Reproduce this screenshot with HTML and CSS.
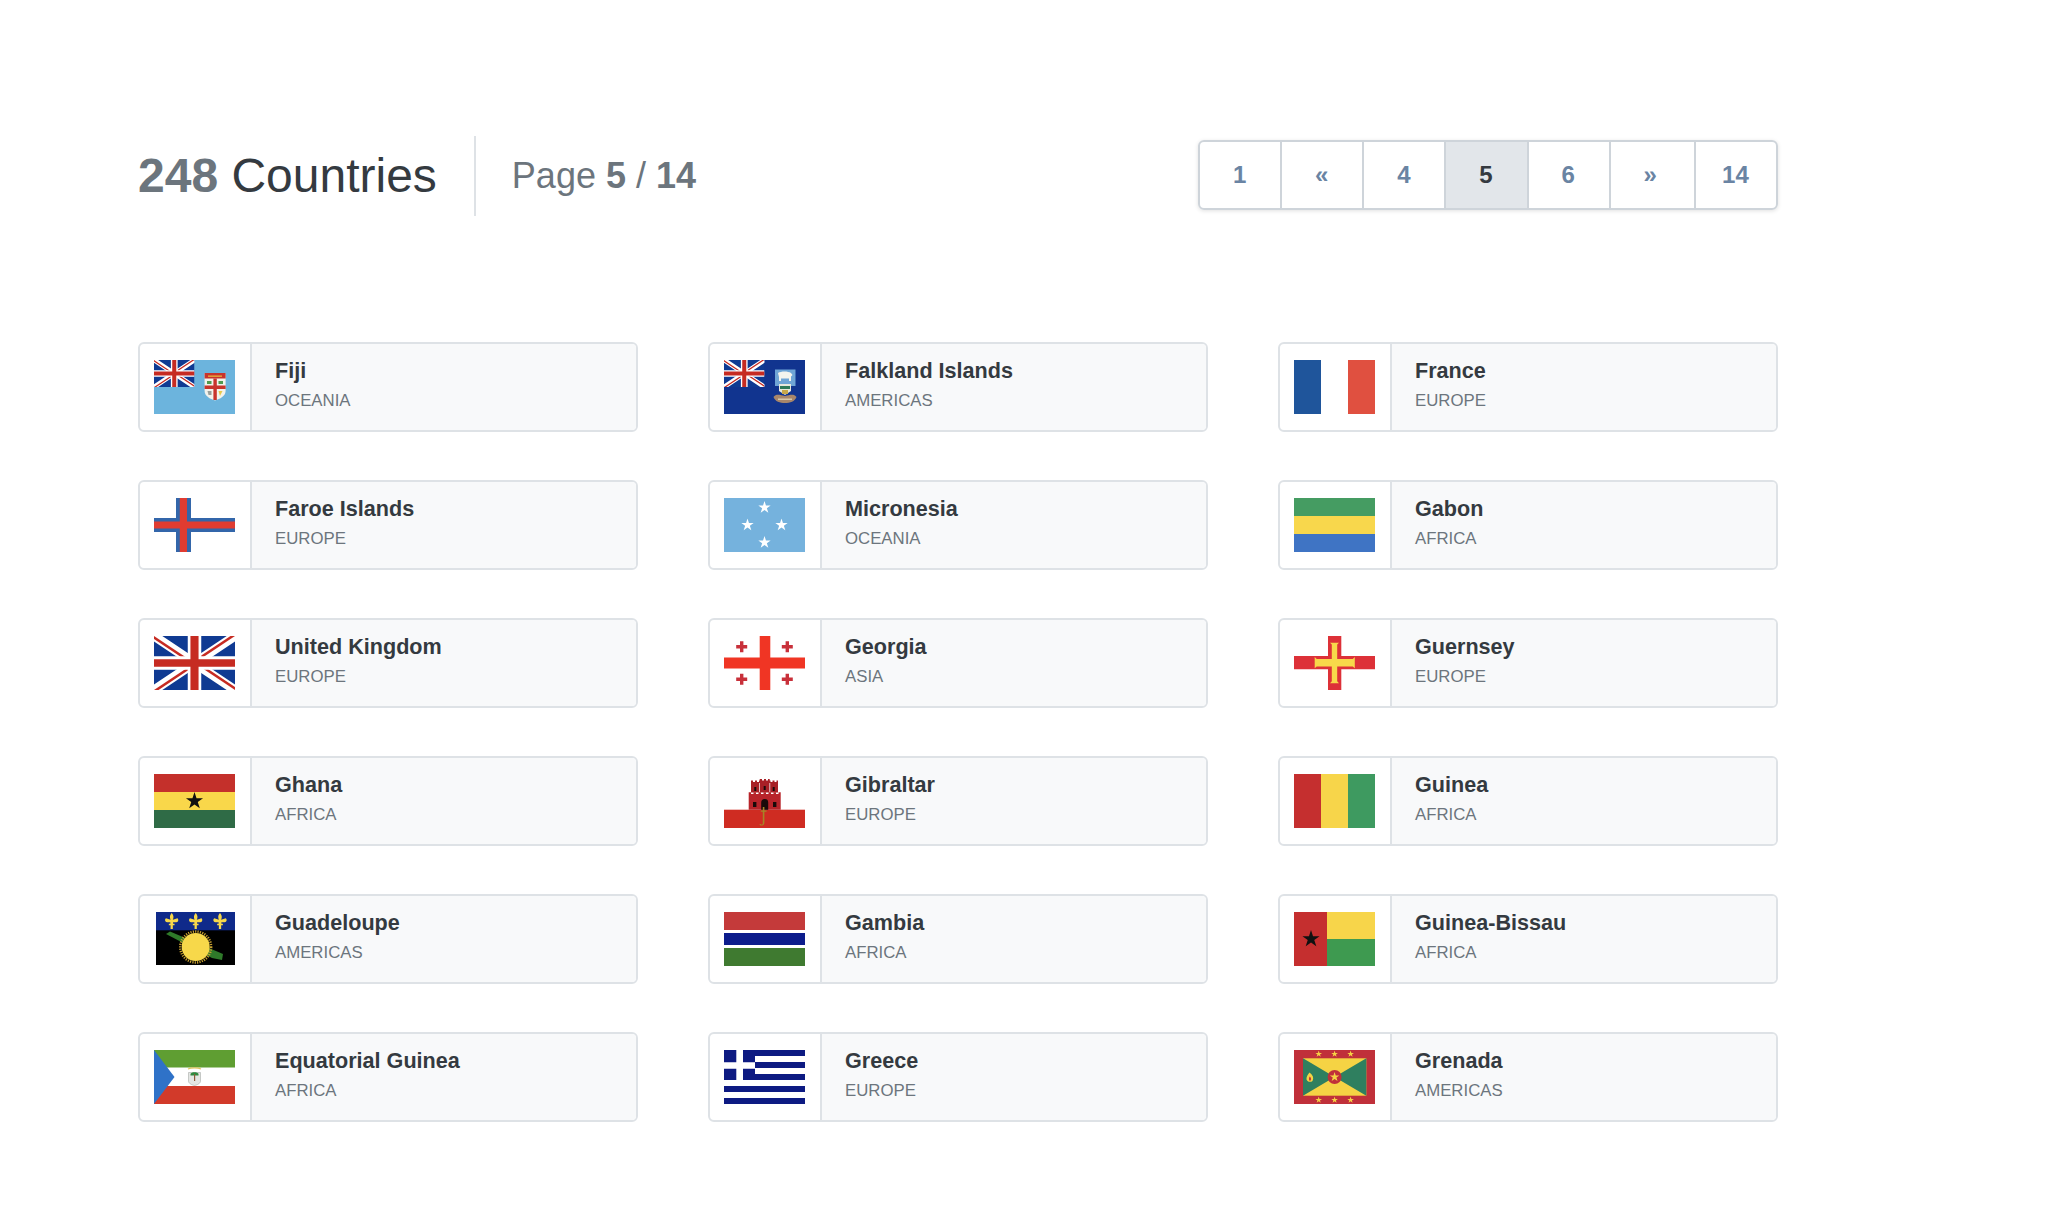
FILE: index.html
```html
<!DOCTYPE html>
<html lang="en">
<head>
    <meta charset="UTF-8">
    <title>Countries - Page 5</title>
    <link rel="stylesheet" href="styles.css">
</head>
<body>
    <!-- shared flag pieces -->
    <svg class="defs" width="0" height="0">
        <defs>
            <clipPath id="jack-clip"><path d="M30,15 h30 v15 z v15 h-30 z h-30 v-15 z v-15 h30 z"/></clipPath>
            <symbol id="jack" viewBox="0 0 60 30" preserveAspectRatio="none">
                <rect width="60" height="30" fill="#0f3a92"/>
                <path d="M0,0 L60,30 M60,0 L0,30" stroke="#fff" stroke-width="5.5"/>
                <path d="M0,0 L60,30 M60,0 L0,30" stroke="#c62b22" stroke-width="3" clip-path="url(#jack-clip)"/>
                <path d="M25,0 H35 V11.3 H60 V18.7 H35 V30 H25 V18.7 H0 V11.3 H25 Z" fill="#fff"/>
                <path d="M27,0 H33 V12.9 H60 V17.1 H33 V30 H27 V17.1 H0 V12.9 H27 Z" fill="#c62b22"/>
            </symbol>
            <symbol id="star" viewBox="-1 -1 2 2">
                <polygon points="0,-1 .225,-.309 .951,-.309 .363,.118 .588,.809 0,.382 -.588,.809 -.363,.118 -.951,-.309 -.225,-.309"/>
            </symbol>
            <symbol id="fleur" viewBox="0 0 12 14">
                <path d="M6,0 C7.6,2 8,3.5 7,6 L11,4.5 C12.4,5.5 12,8 10,8 L7.2,8 L7.2,9.5 L8.5,9.5 L8.5,10.8 L7,10.8 L7,14 L5,14 L5,10.8 L3.5,10.8 L3.5,9.5 L4.8,9.5 L4.8,8 L2,8 C0,8 -.4,5.5 1,4.5 L5,6 C4,3.5 4.4,2 6,0 Z" fill="#f7d84a"/>
            </symbol>
        </defs>
    </svg>

    <div class="page">
        <header class="page-header">
            <h1 class="total"><strong>248</strong> Countries</h1>
            <p class="page-count">Page <strong>5</strong> / <strong>14</strong></p>
            <nav class="pagination">
                <a href="#">1</a>
                <a href="#">«</a>
                <a href="#">4</a>
                <a href="#" class="active">5</a>
                <a href="#">6</a>
                <a href="#" class="next">»</a>
                <a href="#">14</a>
            </nav>
        </header>

        <div class="country-grid">
            <a href="#" class="country-card">
                <span class="flag-cell">
                    <svg class="flag" viewBox="0 0 81 54">
                        <rect width="81" height="54" fill="#6cb4dd"/>
                        <use href="#jack" width="40.5" height="27"/>
                        <path d="M50.6,13 H71.6 V31 C71.6,36 66,39 61,40.5 C56,39 50.6,36 50.6,31 Z" fill="#f2f2ec"/>
                        <path d="M50.6,13 H71.6 V18.5 H50.6 Z" fill="#c8342c"/>
                        <path d="M54,15.5 H68 V16.8 H54 Z" fill="#e8b93c"/>
                        <path d="M59.4,18.5 H62.8 V40 H59.4 Z M50.6,25.5 H71.6 V29 H50.6 Z" fill="#c8342c"/>
                        <path d="M53,21 H57.5 V24 H53 Z M64.5,21 H69 V24 H64.5 Z" fill="#4f9a4f"/>
                        <path d="M64.5,31 H68.5 L66,36 Z" fill="#e8c94a"/>
                        <path d="M53.5,31 H57.5 V35 H54.5 Z" fill="#9a9f9a"/>
                    </svg>
                </span>
                <span class="info-cell"><span class="country-name">Fiji</span><span class="country-region">OCEANIA</span></span>
            </a>
            <a href="#" class="country-card">
                <span class="flag-cell">
                    <svg class="flag" viewBox="0 0 81 54">
                        <rect width="81" height="54" fill="#11348f"/>
                        <use href="#jack" width="40.5" height="27"/>
                        <path d="M51,9.5 H71.5 V26 H51 Z" fill="#6fa5d6"/>
                        <path d="M54,13 C57,11 64,11 67,13 L68.5,15 L67,16.5 V21 H65 V18.5 H57 V21 H55 V17 Z" fill="#f4f4ee"/>
                        <path d="M55,24 H67 V31 L61,35 L55,31 Z" fill="#e8e8dc"/>
                        <path d="M56,26 H66 V29 H56 Z" fill="#2f7a58"/>
                        <path d="M58,30 H64 V34 H58 Z" fill="#c9a84a"/>
                        <path d="M49.5,37 C52,33.5 56,35 61,36 C66,35 70,33.5 72.5,37 C71,41.5 66,43 61,43 C56,43 51,41.5 49.5,37 Z" fill="#a8866a"/>
                        <path d="M54,38.5 H68 V40 H54 Z" fill="#d8c8a8"/>
                    </svg>
                </span>
                <span class="info-cell"><span class="country-name">Falkland Islands</span><span class="country-region">AMERICAS</span></span>
            </a>
            <a href="#" class="country-card">
                <span class="flag-cell">
                    <svg class="flag" viewBox="0 0 81 54">
                        <rect width="27" height="54" fill="#1f559b"/>
                        <rect x="54" width="27" height="54" fill="#e05040"/>
                    </svg>
                </span>
                <span class="info-cell"><span class="country-name">France</span><span class="country-region">EUROPE</span></span>
            </a>

            <a href="#" class="country-card">
                <span class="flag-cell">
                    <svg class="flag" viewBox="0 0 81 54">
                        <path d="M22,0 H37 V20 H81 V34 H37 V54 H22 V34 H0 V20 H22 Z" fill="#3366aa"/>
                        <path d="M25.8,0 H33 V23.6 H81 V30.4 H33 V54 H25.8 V30.4 H0 V23.6 H25.8 Z" fill="#e03c31"/>
                    </svg>
                </span>
                <span class="info-cell"><span class="country-name">Faroe Islands</span><span class="country-region">EUROPE</span></span>
            </a>
            <a href="#" class="country-card">
                <span class="flag-cell">
                    <svg class="flag" viewBox="0 0 81 54" fill="#fff">
                        <rect width="81" height="54" fill="#75b2dd"/>
                        <use href="#star" x="34" y="3" width="13" height="13"/>
                        <use href="#star" x="34" y="38" width="13" height="13"/>
                        <use href="#star" x="17" y="20.5" width="13" height="13"/>
                        <use href="#star" x="51" y="20.5" width="13" height="13"/>
                    </svg>
                </span>
                <span class="info-cell"><span class="country-name">Micronesia</span><span class="country-region">OCEANIA</span></span>
            </a>
            <a href="#" class="country-card">
                <span class="flag-cell">
                    <svg class="flag" viewBox="0 0 81 54">
                        <rect width="81" height="18" fill="#459c62"/>
                        <rect y="18" width="81" height="18" fill="#f8d74c"/>
                        <rect y="36" width="81" height="18" fill="#3f74c4"/>
                    </svg>
                </span>
                <span class="info-cell"><span class="country-name">Gabon</span><span class="country-region">AFRICA</span></span>
            </a>

            <a href="#" class="country-card">
                <span class="flag-cell">
                    <svg class="flag" viewBox="0 0 81 54" preserveAspectRatio="none">
                        <use href="#jack" width="81" height="54"/>
                    </svg>
                </span>
                <span class="info-cell"><span class="country-name">United Kingdom</span><span class="country-region">EUROPE</span></span>
            </a>
            <a href="#" class="country-card">
                <span class="flag-cell">
                    <svg class="flag" viewBox="0 0 81 54">
                        <path d="M35.7,0 H46.3 V21.5 H81 V32.5 H46.3 V54 H35.7 V32.5 H0 V21.5 H35.7 Z" fill="#f03524"/>
                        <path d="M16,5.2 H19.4 V9 H23.2 V12.4 H19.4 V16.2 H16 V12.4 H12.2 V9 H16 Z M61.6,5.2 H65 V9 H68.8 V12.4 H65 V16.2 H61.6 V12.4 H57.8 V9 H61.6 Z M16,37.8 H19.4 V41.6 H23.2 V45 H19.4 V48.8 H16 V45 H12.2 V41.6 H16 Z M61.6,37.8 H65 V41.6 H68.8 V45 H65 V48.8 H61.6 V45 H57.8 V41.6 H61.6 Z" fill="#c8303a"/>
                    </svg>
                </span>
                <span class="info-cell"><span class="country-name">Georgia</span><span class="country-region">ASIA</span></span>
            </a>
            <a href="#" class="country-card">
                <span class="flag-cell">
                    <svg class="flag" viewBox="0 0 81 54">
                        <path d="M34,0 H47.3 V20 H81 V33.3 H47.3 V54 H34 V33.3 H0 V20 H34 Z" fill="#dd3138"/>
                        <path d="M36,6.7 H45 L43.2,8.6 V23 H58.8 L60.8,21 V32.3 L58.8,30.4 H43.2 V45.2 L45,47.3 H36 L37.8,45.2 V30.4 H22.7 L20.7,32.3 V21 L22.7,23 H37.8 V8.6 Z" fill="#f8d84a"/>
                    </svg>
                </span>
                <span class="info-cell"><span class="country-name">Guernsey</span><span class="country-region">EUROPE</span></span>
            </a>

            <a href="#" class="country-card">
                <span class="flag-cell">
                    <svg class="flag" viewBox="0 0 81 54">
                        <rect width="81" height="18" fill="#c4302b"/>
                        <rect y="18" width="81" height="18" fill="#f9d74a"/>
                        <rect y="36" width="81" height="18" fill="#2f6b46"/>
                        <use href="#star" x="31.5" y="18" width="18" height="18" fill="#111"/>
                    </svg>
                </span>
                <span class="info-cell"><span class="country-name">Ghana</span><span class="country-region">AFRICA</span></span>
            </a>
            <a href="#" class="country-card">
                <span class="flag-cell">
                    <svg class="flag" viewBox="0 0 81 54">
                        <rect y="35.7" width="81" height="18.3" fill="#cf2c22"/>
                        <!-- castle: three towers on a wall -->
                        <path d="M27,18.5 V6.5 H29 V8 H31 V6.5 H33 V8 H35 V6.5 H35.7 V5 H38 V6.5 H40 V5 H42 V6.5 H44 V5 H45.7 V6.5 H46.5 V8 H48.5 V6.5 H50.5 V8 H52.5 V6.5 H54 V18.5 Z" fill="#a82026"/>
                        <path d="M24.7,35.7 V18.3 H27 V20 H29.5 V18.3 H32 V20 H34.5 V18.3 H37 V20 H39.5 V18.3 H42 V20 H44.5 V18.3 H47 V20 H49.5 V18.3 H52 V20 H54.5 V18.3 H56.7 V35.7 Z" fill="#b8242a"/>
                        <path d="M35.2,9 H36 V18 H35.2 Z M45.4,9 H46.2 V18 H45.4 Z" fill="#f4e4e4"/>
                        <path d="M37.2,35.7 V28.5 A3.5,3.5 0 0 1 44.2,28.5 V35.7 Z M29,28 H32.4 V33 H29 Z M49,28 H52.4 V33 H49 Z M30.3,13 H32.3 V17 H30.3 Z M39.7,12 H41.7 V16 H39.7 Z M48.7,13 H50.7 V17 H48.7 Z" fill="#1a0a0a"/>
                        <path d="M38.8,33 H40.4 V49 C40.4,52 35.5,52.5 35.5,50 H37 C37.2,51 38.8,51 38.8,49 Z M36.8,36.5 H42.6 V37.8 H36.8 Z" fill="#a58527"/>
                    </svg>
                </span>
                <span class="info-cell"><span class="country-name">Gibraltar</span><span class="country-region">EUROPE</span></span>
            </a>
            <a href="#" class="country-card">
                <span class="flag-cell">
                    <svg class="flag" viewBox="0 0 81 54">
                        <rect width="27" height="54" fill="#c52f2f"/>
                        <rect x="27" width="27" height="54" fill="#f7d54a"/>
                        <rect x="54" width="27" height="54" fill="#3e9a60"/>
                    </svg>
                </span>
                <span class="info-cell"><span class="country-name">Guinea</span><span class="country-region">AFRICA</span></span>
            </a>

            <a href="#" class="country-card">
                <span class="flag-cell">
                    <svg class="flag" viewBox="0 0 81 54">
                        <rect x="2" width="79" height="53" fill="#000"/>
                        <rect x="2" width="79" height="18.3" fill="#0f2a8a"/>
                        <use href="#fleur" x="10.7" y="1" width="14" height="16"/>
                        <use href="#fleur" x="34.7" y="1" width="14" height="16"/>
                        <use href="#fleur" x="59" y="1" width="14" height="16"/>
                        <path d="M12,22 L16,19.5 L69,42 L68,48 L58,46 Z" fill="#2f7a2a"/>
                        <circle cx="41.7" cy="35" r="15.5" fill="none" stroke="#c8a030" stroke-width="2.4" stroke-dasharray="1.2 1.2"/>
                        <circle cx="41.7" cy="35" r="14" fill="#f7d84a"/>
                    </svg>
                </span>
                <span class="info-cell"><span class="country-name">Guadeloupe</span><span class="country-region">AMERICAS</span></span>
            </a>
            <a href="#" class="country-card">
                <span class="flag-cell">
                    <svg class="flag" viewBox="0 0 81 54">
                        <rect width="81" height="18" fill="#c43a3a"/>
                        <rect y="21" width="81" height="12" fill="#0c1c8c"/>
                        <rect y="36" width="81" height="18" fill="#3f7a30"/>
                    </svg>
                </span>
                <span class="info-cell"><span class="country-name">Gambia</span><span class="country-region">AFRICA</span></span>
            </a>
            <a href="#" class="country-card">
                <span class="flag-cell">
                    <svg class="flag" viewBox="0 0 81 54">
                        <rect width="33" height="54" fill="#c52f2f"/>
                        <rect x="33" width="48" height="27" fill="#f7d54a"/>
                        <rect x="33" y="27" width="48" height="27" fill="#3e9a50"/>
                        <use href="#star" x="8" y="18" width="18" height="18" fill="#111"/>
                    </svg>
                </span>
                <span class="info-cell"><span class="country-name">Guinea-Bissau</span><span class="country-region">AFRICA</span></span>
            </a>

            <a href="#" class="country-card">
                <span class="flag-cell">
                    <svg class="flag" viewBox="0 0 81 54">
                        <rect width="81" height="17.5" fill="#5f9e32"/>
                        <rect y="36" width="81" height="18" fill="#d23a2a"/>
                        <path d="M0,0 L20.5,27 L0,54 Z" fill="#2f72c8"/>
                        <path d="M34.5,22.5 H46.5 V31 C46.5,33.5 43,35 40.5,35.5 C38,35 34.5,33.5 34.5,31 Z" fill="#e4e6e4" stroke="#a8aca8" stroke-width=".6"/>
                        <path d="M36.5,24 C37,21.5 44,21.5 44.5,24 V25.5 H36.5 Z" fill="#2f8a3f"/>
                        <path d="M40,24 H41.2 V31 H40 Z" fill="#8a5a3a"/>
                        <path d="M34,19 C37,17.5 44,17.5 47,19" fill="none" stroke="#e0c45a" stroke-width="1.2"/>
                    </svg>
                </span>
                <span class="info-cell"><span class="country-name">Equatorial Guinea</span><span class="country-region">AFRICA</span></span>
            </a>
            <a href="#" class="country-card">
                <span class="flag-cell">
                    <svg class="flag" viewBox="0 0 81 54">
                        <path d="M31,0 H81 V6 H31 Z M31,12 H81 V18 H31 Z M31,24 H81 V30 H31 Z M0,36 H81 V42 H0 Z M0,48 H81 V54 H0 Z" fill="#0d1a82"/>
                        <path d="M0,0 H12.3 V12.3 H0 Z M19,0 H31 V12.3 H19 Z M0,18.7 H12.3 V30 H0 Z M19,18.7 H31 V30 H19 Z" fill="#0d1a82"/>
                    </svg>
                </span>
                <span class="info-cell"><span class="country-name">Greece</span><span class="country-region">EUROPE</span></span>
            </a>
            <a href="#" class="country-card">
                <span class="flag-cell">
                    <svg class="flag" viewBox="0 0 81 54" fill="#f5d344">
                        <rect width="81" height="54" fill="#c0303a"/>
                        <rect x="9" y="8.3" width="63.3" height="37.4" fill="#f5d344"/>
                        <path d="M9,8.3 L40.6,27 L9,45.7 Z M72.3,8.3 L40.6,27 L72.3,45.7 Z" fill="#2f7f5f"/>
                        <circle cx="40.6" cy="27" r="7" fill="#c0303a"/>
                        <use href="#star" x="35.6" y="22" width="10" height="10"/>
                        <use href="#star" x="21.2" y="0.5" width="7" height="7"/>
                        <use href="#star" x="37.1" y="0.5" width="7" height="7"/>
                        <use href="#star" x="53.1" y="0.5" width="7" height="7"/>
                        <use href="#star" x="21.2" y="46.5" width="7" height="7"/>
                        <use href="#star" x="37.1" y="46.5" width="7" height="7"/>
                        <use href="#star" x="53.1" y="46.5" width="7" height="7"/>
                        <path d="M15.5,22.5 C19,25 20,28 18.5,31 C16.5,32.5 13.5,32 12.5,29.5 C12,27 14,24.5 15.5,22.5 Z"/>
                        <path d="M15.8,26.5 C17.5,28 17.5,30 16,31 C14.8,30.5 14.5,28 15.8,26.5 Z" fill="#c0303a"/>
                    </svg>
                </span>
                <span class="info-cell"><span class="country-name">Grenada</span><span class="country-region">AMERICAS</span></span>
            </a>
        </div>
    </div>
</body>
</html>
```

FILE: styles.css
```css
:root {
    --text-dark: #343a40;
    --text-muted: #6c757d;
    --border-light: #dee2e6;
    --cell-light: #f8f9fa;
    --link-color: #6a84a3;
}

body {
    margin: 0;
    font-family: "Liberation Sans", Arial, sans-serif;
    background-color: #fff;
    color: var(--text-dark);
}

.defs {
    position: absolute;
}

.page {
    width: 1640px;
    padding: 136px 0 60px 138px;
}

.page-header {
    display: flex;
    align-items: center;
    height: 80px;
    margin-bottom: 126px;
}

.total {
    margin: 0;
    padding-right: 37px;
    border-right: 2px solid var(--border-light);
    font-size: 48px;
    font-weight: 400;
    line-height: 80px;
}

.total strong {
    color: var(--text-muted);
}

.page-count {
    margin: 0 0 0 36px;
    font-size: 36px;
    color: var(--text-muted);
}

.pagination {
    display: flex;
    width: 580px;
    height: 70px;
    margin: 0 0 3px auto;
    border: 2px solid #ced4da;
    border-radius: 6px;
    box-sizing: border-box;
    box-shadow: 0 1px 4px rgba(0, 0, 0, 0.12);
    overflow: hidden;
}

.pagination a {
    flex: 1 1 0;
    display: flex;
    align-items: center;
    justify-content: center;
    box-sizing: border-box;
    padding-right: 1px;
    border-left: 2px solid #ced4da;
    font-size: 24px;
    font-weight: 700;
    color: var(--link-color);
    text-decoration: none;
}

.pagination a:first-child {
    border-left: none;
}

.pagination a.next {
    padding-right: 4px;
}

.pagination a.active {
    background-color: #e2e6ea;
    color: var(--text-dark);
}

.country-grid {
    display: grid;
    grid-template-columns: repeat(3, 500px);
    gap: 48px 70px;
}

.country-card {
    display: flex;
    height: 90px;
    box-sizing: border-box;
    border: 2px solid var(--border-light);
    border-radius: 6px;
    overflow: hidden;
    color: inherit;
    text-decoration: none;
}

.flag-cell {
    display: flex;
    align-items: center;
    padding: 0 15px 0 14px;
    border-right: 2px solid var(--border-light);
}

.flag {
    display: block;
    width: 81px;
    height: 54px;
    filter: blur(0.3px);
}

.info-cell {
    flex: 1;
    display: flex;
    flex-direction: column;
    justify-content: center;
    gap: 5px;
    padding: 0 0 5px 23px;
    background-color: var(--cell-light);
}

.country-name {
    font-size: 21.6px;
    font-weight: 700;
    line-height: 28px;
}

.country-region {
    font-size: 16.8px;
    line-height: 22px;
    color: var(--text-muted);
}
```
